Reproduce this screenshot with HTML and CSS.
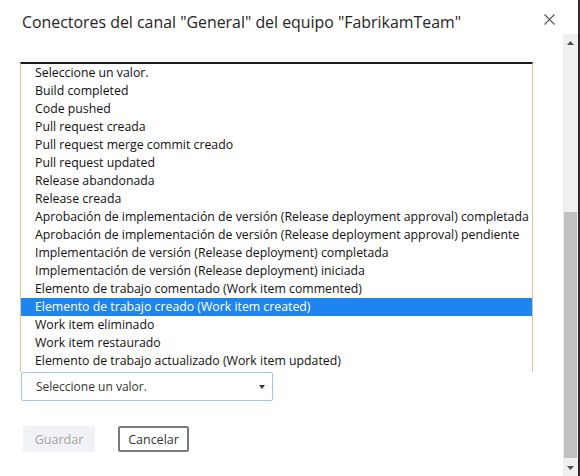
FILE: index.html
```html
<!DOCTYPE html>
<html lang="es">
<head>
<meta charset="utf-8">
<title>Conectores</title>
<link rel="stylesheet" href="styles.css">
</head>
<body>
<div class="window">
  <header class="head">
    <h1 class="title">Conectores del canal "General" del equipo "FabrikamTeam"</h1>
    <button class="close" aria-label="Cerrar">
      <svg width="11" height="11" viewBox="0 0 11 11"><path d="M0.5 0.5 L10.5 10.5 M10.5 0.5 L0.5 10.5" stroke="#555" stroke-width="1.1" fill="none"/></svg>
    </button>
  </header>
  <div class="body">
    <div class="content">
      <ul class="listbox">
        <li>Seleccione un valor.</li>
        <li>Build completed</li>
        <li>Code pushed</li>
        <li>Pull request creada</li>
        <li>Pull request merge commit creado</li>
        <li>Pull request updated</li>
        <li>Release abandonada</li>
        <li>Release creada</li>
        <li>Aprobación de implementación de versión (Release deployment approval) completada</li>
        <li>Aprobación de implementación de versión (Release deployment approval) pendiente</li>
        <li>Implementación de versión (Release deployment) completada</li>
        <li>Implementación de versión (Release deployment) iniciada</li>
        <li>Elemento de trabajo comentado (Work item commented)</li>
        <li class="selected">Elemento de trabajo creado (Work item created)</li>
        <li>Work item eliminado</li>
        <li>Work item restaurado</li>
        <li>Elemento de trabajo actualizado (Work item updated)</li>
      </ul>
      <div class="select">
        <span>Seleccione un valor.</span>
        <svg class="caret" width="6" height="4" viewBox="0 0 6 4"><path d="M0 0 H6 L3 4 Z" fill="#333"/></svg>
      </div>
      <div class="actions">
        <button class="btn btn-primary">Guardar</button>
        <button class="btn btn-secondary">Cancelar</button>
      </div>
    </div>
    <div class="scrollbar">
      <div class="sb-btn"><svg width="7" height="4" viewBox="0 0 7 4"><path d="M0 4 H7 L3.5 0 Z" fill="#505050"/></svg></div>
      <div class="sb-track"><div class="sb-thumb"></div></div>
      <div class="sb-btn"><svg width="7" height="4" viewBox="0 0 7 4"><path d="M0 0 H7 L3.5 4 Z" fill="#505050"/></svg></div>
    </div>
  </div>
</div>
</body>
</html>
```

FILE: styles.css
```css
* { box-sizing: border-box; }
html, body { margin: 0; padding: 0; background: #fff; }
body {
  font-family: "Open Sans", "Noto Sans", "Liberation Sans", sans-serif;
  color: #252423;
}
.window {
  width: 580px;
  height: 476px;
  border-right: 2px solid #2e2a2a;
  display: flex;
  flex-direction: column;
  overflow: hidden;
}
.head {
  height: 34px;
  display: flex;
  align-items: center;
  padding-left: 22px;
  padding-right: 24px;
  padding-top: 10px;
}
.title {
  margin: 0;
  font-size: 15.9px;
  font-weight: 400;
  flex: 1;
  color: #252423;
  white-space: nowrap;
}
.close {
  border: 0;
  background: none;
  padding: 0;
  width: 11px;
  height: 11px;
  display: flex;
  margin-top: -5px;
  margin-right: -1px;
}
.body {
  flex: 1;
  display: flex;
}
.content {
  flex: 1;
  padding-left: 20px;
  padding-top: 28px;
}
.listbox {
  list-style: none;
  margin: 0;
  padding: 0 0 2px 0;
  width: 513px;
  border-top: 2px solid #1b1b1b;
  border-left: 1px solid #d9c29c;
  border-right: 1px solid #d9c29c;
  font-size: 12.3px;
  color: #111;
}
.listbox li {
  height: 18px;
  line-height: 18px;
  padding-left: 14px;
  white-space: nowrap;
}
.listbox li.selected {
  background: #1f85ee;
  color: #fff;
}
.select {
  margin-left: 1px;
  width: 252px;
  height: 29px;
  border: 1px solid #a3c6ea;
  border-radius: 2px;
  box-shadow: 0 0 1px #c7ddf3;
  display: flex;
  align-items: center;
  justify-content: space-between;
  padding: 0 7px 0 14px;
  font-size: 12px;
  color: #333;
}
.actions {
  display: flex;
  gap: 23px;
  margin-top: 25px;
  margin-left: 3px;
}
.btn {
  font-family: inherit;
  font-size: 12.5px;
  height: 26px;
  border-radius: 2px;
  padding: 0;
}
.btn-primary {
  width: 72px;
  background: #f1f2f5;
  border: 0;
  color: #a3a3a3;
}
.btn-secondary {
  width: 71px;
  background: #fff;
  border: 2px solid #7a7a7a;
  color: #333;
}
.scrollbar {
  width: 15px;
  background: #f0f0f0;
  display: flex;
  flex-direction: column;
}
.sb-btn {
  height: 17px;
  display: flex;
  align-items: center;
  justify-content: center;
}
.sb-track {
  flex: 1;
  padding-top: 161px;
  padding-left: 1px;
  padding-right: 1px;
}
.sb-thumb {
  height: 246px;
  background: #c1c1c1;
}
```
